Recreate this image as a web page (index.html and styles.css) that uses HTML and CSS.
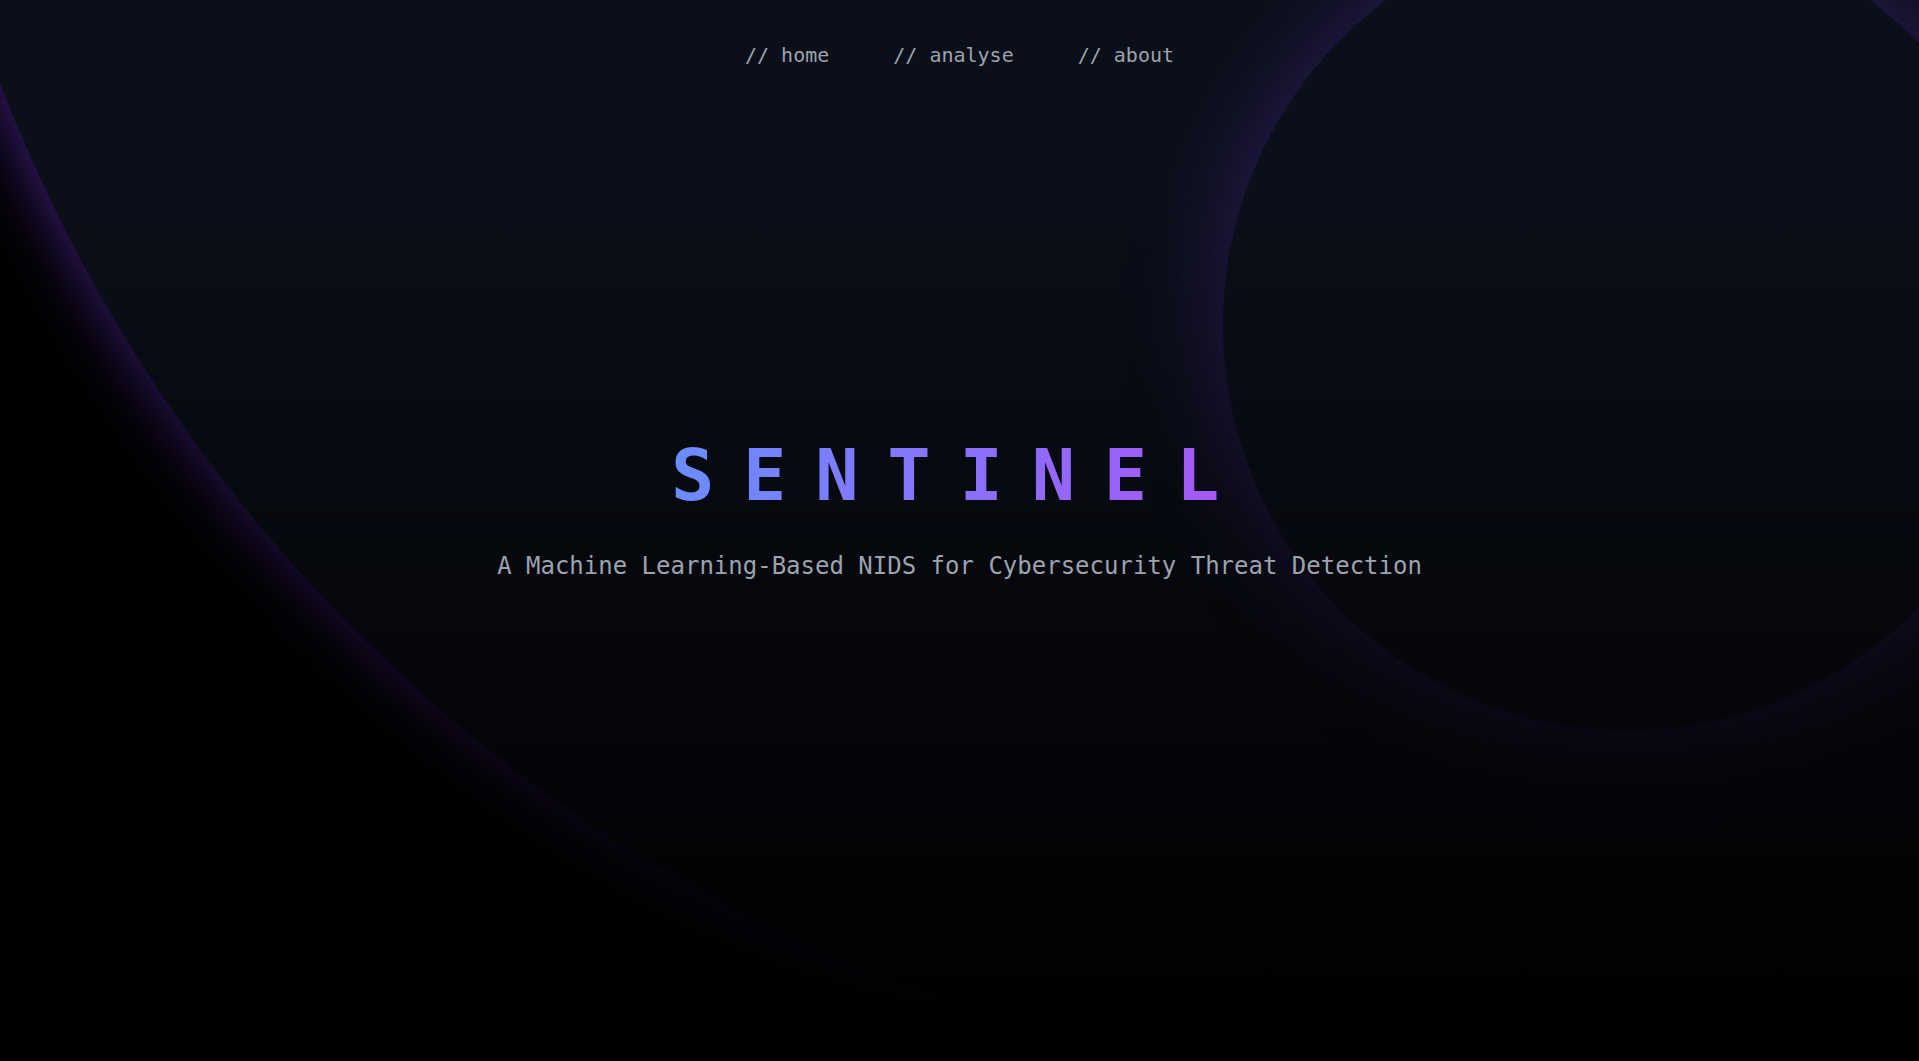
FILE: index.html
```html
<!DOCTYPE html>
<html lang="en">
<head>
<meta charset="utf-8">
<title>Sentinel</title>
<link rel="stylesheet" href="styles.css">
</head>
<body>
<div class="backdrop" aria-hidden="true">
  <div class="orb orb-large"></div>
  <div class="orb orb-ring"></div>
  <div class="fade"></div>
</div>
<header class="nav">
  <a class="nav-link" href="#">// home</a>
  <a class="nav-link" href="#">// analyse</a>
  <a class="nav-link" href="#">// about</a>
</header>
<main class="hero">
  <h1 class="title">SENTINEL</h1>
  <p class="tagline">A Machine Learning-Based NIDS for Cybersecurity Threat Detection</p>
</main>
</body>
</html>
```
FILE: styles.css
```css
html, body {
  margin: 0;
  height: 100%;
}

body {
  position: relative;
  overflow: hidden;
  background: #000;
  font-family: "DejaVu Sans Mono", "Liberation Mono", monospace;
}

.backdrop {
  position: absolute;
  inset: 0;
  overflow: hidden;
  z-index: 0;
}

.orb {
  position: absolute;
  border-radius: 50%;
  background: #0b0f19;
}

.orb-large {
  left: -104px;
  top: -2049px;
  width: 3140px;
  height: 3140px;
  box-shadow: 0 0 64px rgba(124, 58, 237, 0.58);
}

.orb-ring {
  left: 1223px;
  top: -80px;
  width: 810px;
  height: 810px;
  box-shadow: 0 0 100px rgba(124, 58, 237, 0.3);
}

.fade {
  position: absolute;
  inset: 0;
  background: linear-gradient(to bottom, rgba(0, 0, 0, 0) 16%, #000 97%);
}

.nav {
  position: relative;
  z-index: 1;
  display: flex;
  justify-content: center;
  gap: 64px;
  padding-top: 40px;
}

.nav-link {
  color: #9ca3af;
  text-decoration: none;
  font-size: 20px;
  line-height: 30px;
}

.hero {
  position: relative;
  z-index: 1;
  display: flex;
  flex-direction: column;
  align-items: center;
  padding-top: 369px;
}

.title {
  margin: 0;
  font-size: 72px;
  line-height: 72px;
  font-weight: 700;
  letter-spacing: 0.4em;
  background: linear-gradient(90deg, #6a8dff 0%, #a855f7 100%);
  -webkit-background-clip: text;
  background-clip: text;
  color: transparent;
}

.tagline {
  margin: 37px 0 0;
  font-size: 24px;
  line-height: 36px;
  color: #9ca3af;
}
```
